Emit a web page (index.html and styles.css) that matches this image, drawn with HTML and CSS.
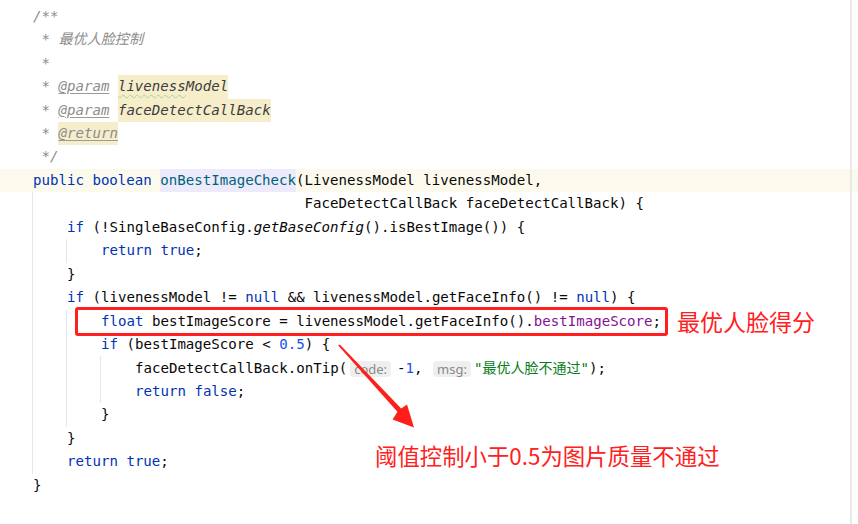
FILE: index.html
```html
<!DOCTYPE html>
<html lang="zh">
<head>
    <meta charset="UTF-8">
    <meta name="viewport" content="width=device-width, initial-scale=1.0">
    <title>onBestImageCheck</title>
    <link rel="stylesheet" href="styles.css">
</head>
<body>
    <div class="editor">
        <div class="line"><span class="c">/**</span></div>
        <div class="line"><span class="c"> * 最优人脸控制</span></div>
        <div class="line"><span class="c"> *</span></div>
        <div class="line"><span class="c"> * <span class="tag">@param</span> <span class="pname"><span class="typo">liveness</span>Model</span></span></div>
        <div class="line"><span class="c"> * <span class="tag">@param</span> <span class="pname">faceDetectCallBack</span></span></div>
        <div class="line"><span class="c"> * <span class="tag mark">@return</span></span></div>
        <div class="line"><span class="c"> */</span></div>
        <div class="line current"><span class="kw">public boolean</span> <span class="decl">onBestImageCheck</span>(LivenessModel livenessModel,</div>
        <div class="block">
            <div class="line">                            FaceDetectCallBack faceDetectCallBack) {</div>
            <div class="line"><span class="kw">if</span> (!SingleBaseConfig.<span class="static">getBaseConfig</span>().isBestImage()) {</div>
            <div class="block">
                <div class="line"><span class="kw">return true</span>;</div>
            </div>
            <div class="line">}</div>
            <div class="line"><span class="kw">if</span> (livenessModel != <span class="kw">null</span> &amp;&amp; livenessModel.getFaceInfo() != <span class="kw">null</span>) {</div>
            <div class="block">
                <div class="line marked"><span class="box"><span class="kw">float</span> bestImageScore = livenessModel.getFaceInfo().<span class="field">bestImageScore</span>;</span><span class="note">最优人脸得分</span></div>
                <div class="line"><span class="kw">if</span> (bestImageScore &lt; <span class="num">0.5</span>) {</div>
                <div class="block">
                    <div class="line">faceDetectCallBack.onTip(<span class="hint first">code:</span>-<span class="num">1</span>, <span class="hint">msg:</span><span class="str">"<span class="zh">最优人脸不通过</span>"</span>);</div>
                    <div class="line"><span class="kw">return false</span>;</div>
                </div>
                <div class="line">}</div>
            </div>
            <div class="line">}</div>
            <div class="line"><span class="kw">return true</span>;</div>
        </div>
        <div class="line">}</div>

        <div class="margin-guide"></div>

        <svg class="arrow" width="858" height="524" viewBox="0 0 858 524">
            <polygon points="338.2,345.6 339.8,344.4 401.2,408.4 407,404.6 414,427.5 392.6,419.4 397.4,411.8"/>
        </svg>
        <div class="callout">阈值控制小于0.5为图片质量不通过</div>
    </div>
</body>
</html>
```

FILE: styles.css
```css
body {
    margin: 0;
    background: #fff;
    font-family: "DejaVu Sans Mono", "Noto Sans CJK SC", monospace;
    font-size: 14.1px;
    color: #080808;
}
.editor {
    position: relative;
    height: 524px;
    padding: 4.85px 0 0 33px;
    box-sizing: border-box;
    overflow: hidden;
}
.line {
    height: 23.45px;
    line-height: 23.45px;
    white-space: pre;
}
.current {
    margin-left: -33px;
    padding-left: 33px;
    background: #fcfaed;
}
.block {
    margin-left: -1px;
    padding-left: 34px;
    border-left: 1px solid #e6e6e6;
}

/* syntax */
.c {
    color: #8c8c8c;
    font-style: italic;
}
.tag {
    text-decoration: underline;
    text-decoration-color: #9a9a9a;
    text-underline-offset: 2px;
}
.pname,
.mark {
    display: inline-block;
    background: #f6eecb;
}
.pname {
    color: #3d3d3d;
}
.typo {
    text-decoration: underline wavy #a9d3a0;
    text-decoration-thickness: 1px;
    text-underline-offset: 3px;
}
.kw {
    color: #0033b3;
}
.decl {
    display: inline-block;
    color: #00627a;
    background: #edebfb;
}
.static {
    font-style: italic;
}
.field {
    color: #871094;
}
.num {
    color: #1750eb;
}
.str {
    color: #067d17;
}
.zh {
    font-family: "Noto Sans CJK SC", sans-serif;
    font-size: 14px;
}
.hint {
    display: inline-block;
    height: 16px;
    line-height: 16px;
    padding: 0 4px;
    margin: 0 3px 0 2px;
    vertical-align: -1px;
    border-radius: 4px;
    background: #efefef;
    color: #8a8a8a;
    font-family: "Noto Sans", sans-serif;
    font-size: 13px;
}
.hint.first {
    margin: 0 6px 0 3px;
}

/* annotations */
.marked {
    display: flex;
    align-items: center;
}
.box {
    height: 23px;
    line-height: 23px;
    margin-left: -26px;
    padding: 0 4px 0 23px;
    border: 3px solid #ff1f1f;
    border-radius: 3px;
}
.note {
    margin-left: 9px;
    color: #ff2121;
    font-family: "Noto Sans CJK SC", sans-serif;
    font-size: 23px;
    line-height: 1;
}
.margin-guide {
    position: absolute;
    top: 0;
    bottom: 0;
    left: 850px;
    width: 2px;
    background: #e9e9e9;
}
.arrow {
    position: absolute;
    top: 0;
    left: 0;
    pointer-events: none;
}
.arrow polygon {
    fill: #ff1f1a;
}
.callout {
    position: absolute;
    left: 375px;
    top: 442px;
    color: #ff2121;
    font-family: "Noto Sans CJK SC", sans-serif;
    font-size: 22.4px;
    line-height: 1.2;
}
```
